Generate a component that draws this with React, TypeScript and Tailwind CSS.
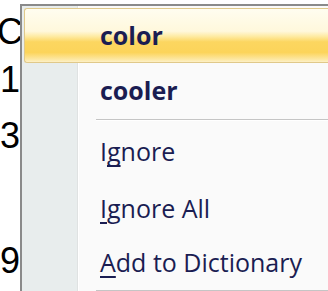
import React from "react";

type Item = { label: React.ReactNode; bold?: boolean };

const Key: React.FC<{ children: React.ReactNode }> = ({ children }) => (
  <u className="underline underline-offset-[4px] decoration-[2px] [text-decoration-skip-ink:none]">
    {children}
  </u>
);

const suggestions: Item[] = [
  { label: "color", bold: true },
  { label: "cooler", bold: true },
];

const actions: Item[] = [
  { label: <>I<Key>g</Key>nore</> },
  { label: <><Key>I</Key>gnore All</> },
  { label: <><Key>A</Key>dd to Dictionary</> },
];

const Separator: React.FC = () => (
  <div className="h-[6px] ml-[74px] pt-[2px]">
    <div className="h-[1px] bg-[#c5c5c5]" />
    <div className="h-[1px] bg-white" />
  </div>
);

const App: React.FC = () => {
  return (
    <div className="w-[328px] h-[291px] bg-white flex overflow-hidden font-['Open_Sans',sans-serif]">
      {/* document text behind the menu */}
      <div className="w-[20px] shrink-0 overflow-hidden whitespace-nowrap font-['Liberation_Sans',sans-serif] text-[36px] leading-none text-black">
        <div className="mt-[14px] -ml-[3px]">C</div>
        <div className="mt-[12px]">
          1<span className="text-[#3a5aa8]">(</span>
        </div>
        <div className="mt-[20px]">
          3<span className="text-[#c9a34a]">;</span>
        </div>
        <div className="mt-[89px]">9</div>
      </div>

      <div className="flex-1 mt-[4px] border-t-2 border-l-2 border-[#8a8a8a] bg-[linear-gradient(to_right,#e8eded_0,#e8eded_55px,#dfe2e2_55px,#dfe2e2_56px,#ffffff_56px,#ffffff_57px,#fafafa_57px)] pt-[2px] text-[25px] leading-none text-[#1a1d52]">
        <div className="ml-[2px] h-[55px] flex items-center pl-[75px] font-bold rounded-l-[3px] border border-r-0 border-[#e0c98a] bg-[linear-gradient(to_bottom,#fffdf0_0%,#fff8dc_42%,#feeaa0_52%,#fcd660_62%,#fcd45a_82%,#fde9a8_96%,#fdf0c8_100%)]">
          {suggestions[0].label}
        </div>
        <div className="h-[54px] flex items-center pl-[78px] font-bold">
          {suggestions[1].label}
        </div>
        <Separator />
        {actions.map((a, i) => (
          <div
            key={i}
            className={`${i === 2 ? "h-[51px]" : "h-[57px]"} flex items-center pl-[78px]`}
          >
            {a.label}
          </div>
        ))}
        <Separator />
      </div>
    </div>
  );
};

export default App;
